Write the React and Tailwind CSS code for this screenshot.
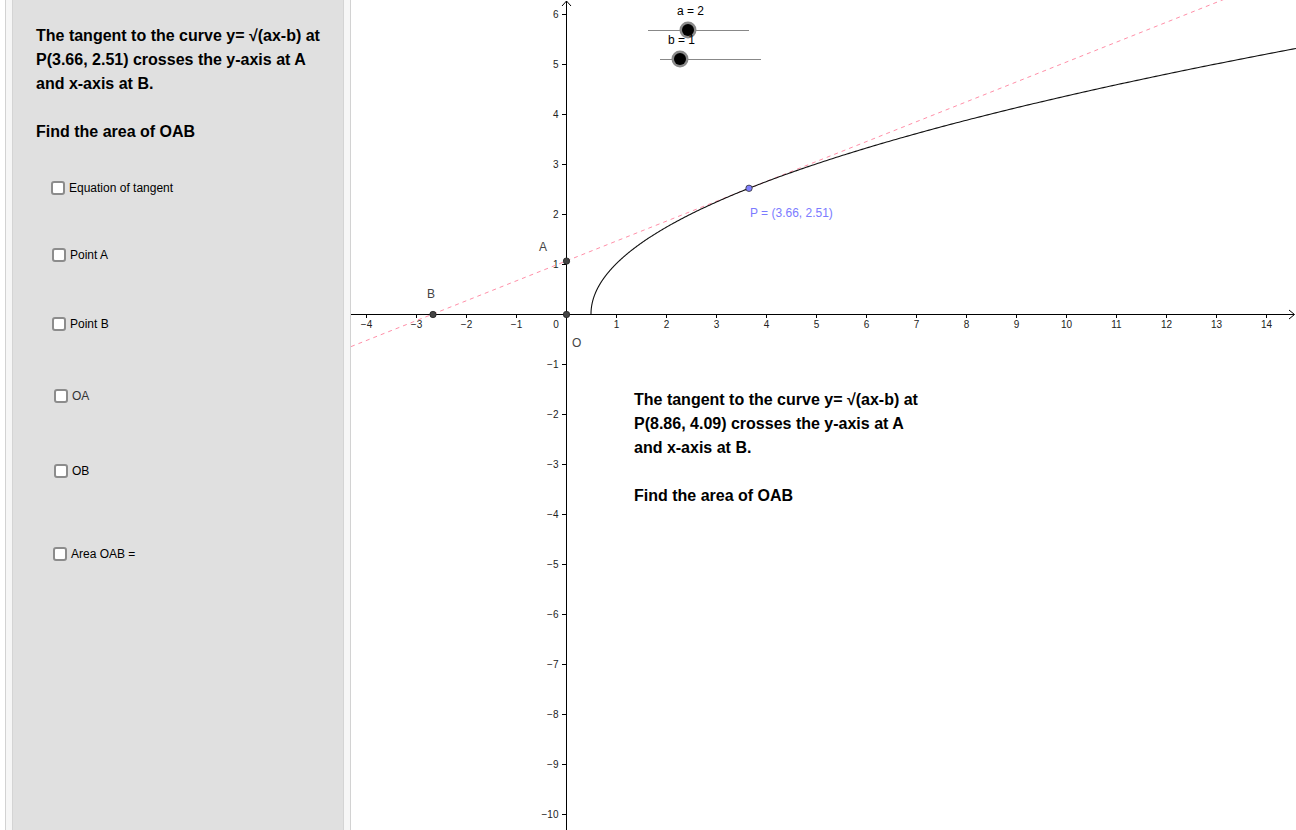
import React from "react";

const OX = 566;
const OY = 314;
const U = 50;

const px = (x) => OX + x * U;
const py = (y) => OY - y * U;

function curvePath() {
  const pts = [];
  for (let i = 0; i <= 400; i++) {
    const t = i / 400;
    const x = 0.5 + Math.pow(t, 2) * (14.6 - 0.5);
    const y = Math.sqrt(Math.max(0, 2 * x - 1));
    pts.push(`${px(x).toFixed(2)},${py(y).toFixed(2)}`);
  }
  return "M" + pts.join(" L");
}

const fmt = (n) => (n < 0 ? "\u2212" + Math.abs(n) : String(n));

function Graph() {
  const Px = 3.66, Py = Math.sqrt(2 * 3.66 - 1);
  const m = 2 / (2 * Py);
  const Ay = Py - m * Px;
  const Bx = -Ay / m;
  const lineY = (x) => Ay + m * x;
  const xL = (351 - OX) / U;
  const xR = (1296 - OX) / U;

  const xs = [];
  for (let i = -4; i <= 14; i++) if (i !== 0) xs.push(i);
  const ys = [];
  for (let i = -10; i <= 6; i++) if (i !== 0) ys.push(i);

  return (
    <svg width="945" height="830" className="block" style={{ fontFamily: '"Liberation Sans", Arial, sans-serif' }}>
      <g transform="translate(-351,0)">
        {/* axes */}
        <line x1="351" y1="314.5" x2="1294" y2="314.5" stroke="#000" strokeWidth="1" />
        <polyline points="1289,310 1294.5,314.5 1289,319" fill="none" stroke="#000" strokeWidth="1" />
        <line x1="566.5" y1="1" x2="566.5" y2="830" stroke="#000" strokeWidth="1" />
        <polyline points="562,6 566.5,1 571,6" fill="none" stroke="#000" strokeWidth="1" />

        {xs.map((i) => (
          <g key={"x" + i}>
            <line x1={px(i) + 0.5} y1="314" x2={px(i) + 0.5} y2="318" stroke="#000" />
            <text x={px(i) + 0.5} y="328" fontSize="10" textAnchor="middle" fill="#222">{fmt(i)}</text>
          </g>
        ))}
        <text x="556" y="328" fontSize="10" textAnchor="middle" fill="#222">0</text>
        {ys.map((i) => (
          <g key={"y" + i}>
            <line x1="562" y1={py(i) + 0.5} x2="566" y2={py(i) + 0.5} stroke="#000" />
            <text x="558.5" y={py(i) + 4} fontSize="10" textAnchor="end" fill="#222">{fmt(i)}</text>
          </g>
        ))}

        {/* tangent */}
        <line x1={px(xL)} y1={py(lineY(xL))} x2={px(xR)} y2={py(lineY(xR))} stroke="#ff8fa8" strokeWidth="1" strokeDasharray="4 4" />
        {/* curve */}
        <path d={curvePath()} fill="none" stroke="#111" strokeWidth="1.1" />

        {/* points */}
        <circle cx={px(0) + 0.5} cy={py(Ay)} r="3.2" fill="#444" stroke="#222" strokeWidth="0.8" />
        <circle cx={px(Bx)} cy="314.5" r="3.2" fill="#444" stroke="#222" strokeWidth="0.8" />
        <circle cx="566.5" cy="314.5" r="3.2" fill="#444" stroke="#222" strokeWidth="0.8" />
        <circle cx={px(Px)} cy={py(Py)} r="3.2" fill="#8080ff" stroke="#333" strokeWidth="0.8" />

        <text x="539" y="251" fontSize="12" fill="#444">A</text>
        <text x="427" y="298" fontSize="12" fill="#444">B</text>
        <text x="572" y="347" fontSize="12" fill="#444">O</text>
        <text x="750" y="217" fontSize="12" fill="#7b7bff">P = (3.66, 2.51)</text>

        {/* sliders */}
        <line x1="648" y1="30.5" x2="749" y2="30.5" stroke="#888" strokeWidth="1" />
        <line x1="660" y1="59.5" x2="761" y2="59.5" stroke="#888" strokeWidth="1" />
        <text x="677" y="15" fontSize="12" fill="#000">a = 2</text>
        <circle cx="688" cy="30" r="8.5" fill="#8a8a8a" />
        <circle cx="688" cy="30" r="6" fill="#000" />
        <text x="668" y="44" fontSize="12" fill="#000">b = 1</text>
        <circle cx="680" cy="59" r="8.5" fill="#8a8a8a" />
        <circle cx="680" cy="59" r="6" fill="#000" />
      </g>
    </svg>
  );
}

function Check({ label, className = "", textClass = "text-black" }) {
  return (
    <div className={`flex items-center h-[14px] ${className}`}>
      <span className="w-[14px] h-[14px] rounded-[3px] border-2 border-[#8c8c8c] bg-white shrink-0" />
      <span className={`ml-[4px] text-[12px] leading-none ${textClass}`}>{label}</span>
    </div>
  );
}

function Problem({ point }) {
  return (
    <div className="font-bold text-[16px] leading-[24px] text-black whitespace-nowrap">
      <p>The tangent to the curve y= √(ax-b) at</p>
      <p>P({point}) crosses the y-axis at A</p>
      <p>and x-axis at B.</p>
      <p className="mt-[24px]">Find the area of OAB</p>
    </div>
  );
}

export default function App() {
  return (
    <div className="flex w-[1296px] h-[830px] overflow-hidden bg-white" style={{ fontFamily: '"Liberation Sans", Arial, sans-serif' }}>
      <div className="ml-[5px] w-[346px] h-full flex border-l border-r border-[#d2d2d2] bg-[#f6f6f6] px-[6px]">
        <div className="w-[332px] h-full bg-[#e0e0e0] border-l border-r border-[#d4d4d4]">
          <div className="pt-[24px] pl-[23px]">
            <Problem point="3.66, 2.51" />
          </div>
          <Check label="Equation of tangent" className="mt-[37px] ml-[38px]" />
          <Check label="Point A" className="mt-[53px] ml-[39px]" />
          <Check label="Point B" className="mt-[55px] ml-[39px]" />
          <Check label="OA" className="mt-[58px] ml-[41px]" textClass="text-[#333]" />
          <Check label="OB" className="mt-[61px] ml-[41px]" />
          <Check label="Area OAB =" className="mt-[69px] ml-[40px]" />
        </div>
      </div>
      <div className="relative flex-1 h-full">
        <Graph />
        <div className="absolute left-[283px] top-[388px]">
          <Problem point="8.86, 4.09" />
        </div>
      </div>
    </div>
  );
}
